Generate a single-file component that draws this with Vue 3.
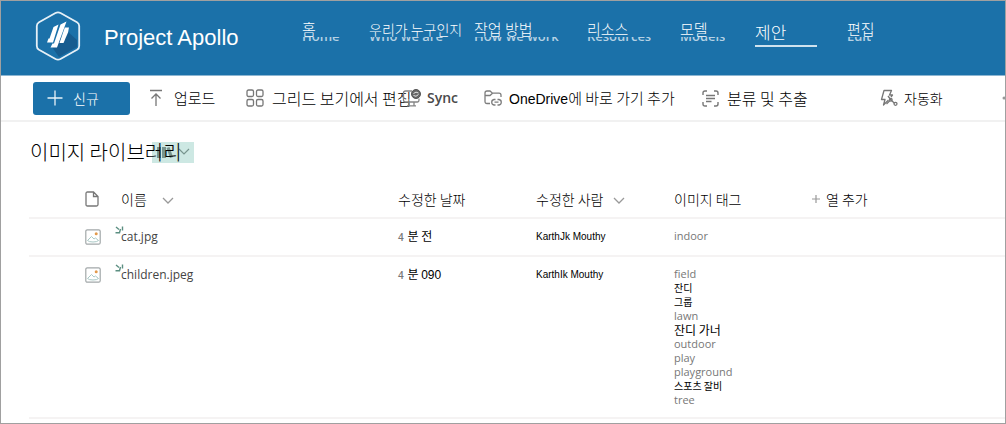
<script setup>
const nav = [
  { label: '홈', sub: 'Home' },
  { label: '우리가 누구인지', sub: 'Who we are', compact: true },
  { label: '작업 방법', sub: 'How we work' },
  { label: '리소스', sub: 'Resources' },
  { label: '모델', sub: 'Models' },
  { label: '제안', active: true },
  { label: '편집', sub: 'Edit' },
]

const files = [
  {
    name: 'cat.jpg',
    unit: '분 전',
    num: '',
    person: 'KarthJk Mouthy',
    tags: [{ t: 'indoor' }],
  },
  {
    name: 'children.jpeg',
    unit: '분',
    num: '090',
    person: 'KarthIk Mouthy',
    tags: [
      { t: 'field' },
      { t: '잔디', k: 'small' },
      { t: '그룹', k: 'small' },
      { t: 'lawn' },
      { t: '잔디 가너', k: 'large' },
      { t: 'outdoor' },
      { t: 'play' },
      { t: 'playground' },
      { t: '스포츠 잘비', k: 'small' },
      { t: 'tree' },
    ],
  },
]
</script>

<template>
  <div class="page">
    <header class="banner">
      <svg class="logo" width="46" height="50" viewBox="0 0 46 50" aria-hidden="true">
        <path d="M32 20 L42 29 V36 L24 46 L17 36 Z" fill="#175c8f" />
        <path
          d="M20.5 2 Q23 .6 25.500 2 L42 11.200 Q44.200 12.500 44.200 15 V35 Q44.200 37.500 42 38.800 L25.500 48 Q23 49.400 20.500 48 L4 38.800 Q1.800 37.500 1.800 35 V15 Q1.800 12.500 4 11.200 Z"
          fill="none" stroke="#e6f0f7" stroke-width="1.800" />
        <g fill="#fff">
          <path d="M18.500 16 L23.500 13.500 L18 31.500 H12 L13.500 27.500 H14.500 Z" />
          <path d="M25.500 13.500 L31.500 10.500 L22 36.500 H15.500 L17.500 32.500 H19 Z" />
          <path d="M29.800 16.500 H34 L33 21.500 L28.500 32 H24.500 Z" />
        </g>
      </svg>
      <h1 class="site">Project Apollo</h1>
      <nav class="nav">
        <a v-for="n in nav" :key="n.label" href="#" :class="{ compact: n.compact, active: n.active }">
          <span class="label">{{ n.label }}</span>
          <span v-if="n.sub" class="sub" aria-hidden="true"><span>{{ n.sub }}</span></span>
        </a>
      </nav>
    </header>

    <div class="toolbar">
      <button class="new">
        <svg width="16" height="16" viewBox="0 0 16 16"><path d="M8 .5V15.500M.5 8H15.500" stroke="#e8f2f8" stroke-width="1.300" /></svg>
        신규
      </button>
      <button class="upload">
        <svg width="14" height="18" viewBox="0 0 14 18" fill="none" stroke="#777" stroke-width="1.300"><path d="M1 1.500H13M7 17V5M2.500 9.500L7 5L11.500 9.500" /></svg>
        업로드
      </button>
      <button class="grid">
        <svg width="18" height="18" viewBox="0 0 18 18" fill="none" stroke="#777" stroke-width="1.300">
          <rect x="1" y="1" width="6.500" height="6.500" rx="1.500" /><rect x="10.500" y="1" width="6.500" height="6.500" rx="1.500" />
          <rect x="1" y="10.500" width="6.500" height="6.500" rx="1.500" /><rect x="10.500" y="10.500" width="6.500" height="6.500" rx="1.500" />
        </svg>
        그리드 보기에서 편집
      </button>
      <button class="sync">
        <svg width="19" height="18" viewBox="0 0 19 18" fill="none" stroke="#858585" stroke-width="1.300">
          <path d="M10 2H3.500Q1.500 2 1.500 4V11Q1.500 13 3.500 13H15.500Q17 13 17 11V9.500M7 13V16.500M12 13V16.500M5 16.800H14" />
          <circle cx="14" cy="5" r="4.500" fill="#666" stroke="#555" stroke-width="1" />
          <path d="M11.500 4.500Q14 2 16.500 4M11.500 6.500Q14 8.500 16.500 5.500" stroke="#e4e4e4" stroke-width="1" />
        </svg>
        Sync
      </button>
      <button class="onedrive">
        <svg width="19" height="18" viewBox="0 0 19 18" fill="none" stroke="#7d7d7d" stroke-width="1.300">
          <path d="M6 14.500H3Q1 14.500 1 12.500V4Q1 2 3 2H6L8.500 4.200H15Q17 4.200 17 6.200V8M1 6.500H6L8.500 4.200" />
          <path d="M11.500 10.500H10A2.800 2.800 0 0 0 10 16H11.500M13.500 10.500H15A2.800 2.800 0 0 1 15 16H13.500M10.500 13.200H14.500" />
        </svg>
        <span><span class="latin">OneDrive</span>에 바로 가기 추가</span>
      </button>
      <button class="classify">
        <svg width="17" height="17" viewBox="0 0 17 17" fill="none" stroke="#777" stroke-width="1.400">
          <path d="M1 5V3Q1 1 3 1H5M12 1H14Q16 1 16 3V5M16 12V14Q16 16 14 16H12M5 16H3Q1 16 1 14V12M4 5.500H13M4 8.500H13M4 11.500H9.500" />
        </svg>
        분류 및 추출
      </button>
      <button class="automate">
        <svg width="18" height="18" viewBox="0 0 18 18" fill="none" stroke="#777" stroke-width="1.300" stroke-linejoin="round">
          <path d="M8.500 11L3.500 16L5 10.500H1.500L4 1.500H11.500L9.500 6H12.500L11 8" />
          <path d="M8 7L11 11L14.500 14.200M9.800 11.800L6.500 15" /><circle cx="15.500" cy="14.800" r="1.500" /><circle cx="10.800" cy="10.800" r="1.300" />
        </svg>
        자동화
      </button>
      <button class="more" aria-label="더 보기"><svg width="3" height="4" viewBox="0 0 3 4"><circle cx="2" cy="2" r="1.500" fill="#999" /></svg></button>
    </div>

    <main>
      <div class="heading">
        <h2>이미지 라이브러리</h2>
        <button class="view" aria-label="보기 옵션">
          <svg width="16" height="13" viewBox="0 0 16 13" fill="#78958f"><rect x="0" y="1" width="4" height="11" /><rect x="5" y="1" width="4" height="11" /><path d="M9.500 2L12.500 1L16 11L13 12Z" /></svg>
          <svg width="12" height="8" viewBox="0 0 12 8" fill="none" stroke="#78958f" stroke-width="1.200"><path d="M1 1L6 6L11 1" /></svg>
        </button>
      </div>

      <table>
        <colgroup><col class="c-icon"><col class="c-name"><col class="c-date"><col class="c-person"><col class="c-tags"><col></colgroup>
        <thead>
          <tr>
            <th class="icon" aria-label="유형">
              <svg width="14" height="16" viewBox="0 0 14 16" fill="none" stroke="#777" stroke-width="1.300"><path d="M2.500 1H8.500L13 5.500V13.500Q13 15 11.500 15H2.500Q1 15 1 13.500V2.500Q1 1 2.500 1ZM8.500 1V5.500H13" /></svg>
            </th>
            <th>이름<svg class="chev wide" width="12" height="8" viewBox="0 0 12 8"><path d="M1 1L6 6L11 1" /></svg></th>
            <th>수정한 날짜</th>
            <th>수정한 사람<svg class="chev" width="12" height="8" viewBox="0 0 12 8"><path d="M1 1L6 6L11 1" /></svg></th>
            <th>이미지 태그</th>
            <th class="add"><button><svg width="8" height="8" viewBox="0 0 8 8"><path d="M4 0V8M0 4H8" stroke="#999" stroke-width="1.200" /></svg>열 추가</button></th>
          </tr>
        </thead>
        <tbody>
          <tr v-for="f in files" :key="f.name">
            <td class="icon">
              <svg width="16" height="16" viewBox="0 0 16 16" fill="none">
                <rect x=".8" y=".8" width="14.400" height="14.400" rx="1.500" stroke="#a2a8a9" stroke-width="1.200" />
                <path d="M2.500 11.500L6.500 7.500L9 10L10.500 9L13.500 11.500Q12 13 8 13Q4 13 2.500 11.500Z" stroke="#a9c9c6" />
                <circle cx="11.200" cy="4.800" r="1.500" fill="#e29a4c" />
              </svg>
            </td>
            <td class="name">
              <svg class="fresh" width="9" height="8" viewBox="0 0 9 8"><path d="M1 1L4 3.500M7.500 .5V4.500M.5 6.800H4.500L5.500 3" fill="none" stroke="#5c8f82" stroke-width="1.400" /></svg>
              <a href="#">{{ f.name }}</a>
            </td>
            <td class="date"><span class="four">4</span> {{ f.unit }} <span class="num">{{ f.num }}</span></td>
            <td class="person">{{ f.person }}</td>
            <td class="tags"><div v-for="g in f.tags" :key="g.t" :class="g.k">{{ g.t }}</div></td>
            <td></td>
          </tr>
        </tbody>
      </table>
    </main>
  </div>
</template>

<style>
body { margin: 0; background: #fff; }
</style>

<style scoped>
* { box-sizing: border-box; }
.page {
  min-height: 100vh;
  border: 1px solid #a0a0a0;
  overflow: hidden;
  background: #fff;
  color: #000;
  font-family: "Noto Sans CJK KR", sans-serif;
  font-weight: 300;
  font-size: 14px;
}
h1, h2 { margin: 0; font-weight: inherit; }
svg { flex: none; }
button { border: 0; padding: 0; background: none; color: inherit; font: inherit; }
a { color: inherit; text-decoration: none; }
.banner {
  display: flex;
  height: 75px;
  padding-left: 34px;
  background: #1b71a9;
  border-bottom: 1px solid #8db6d2;
  color: #fff;
}
.logo { margin-top: 10px; }
.site {
  width: 198px;
  margin: 24px 0 0 23px;
  font: 22px/25px "Liberation Sans", sans-serif;
  white-space: nowrap;
}
.nav {
  display: grid;
  grid-template-columns: 67px 105px 113px 93px 75px 92px auto;
  align-items: start;
  padding-top: 17px;
  white-space: nowrap;
}
.nav a { position: relative; justify-self: start; height: 29px; line-height: 22px; font-size: 15px; }
.nav .compact { font-size: 14px; }
.nav .active { width: 62px; font-size: 17px; line-height: 27px; border-bottom: 2px solid #cfe2ee; }
.sub {
  position: absolute;
  left: 0;
  top: 19px;
  height: 4px;
  overflow: hidden;
  display: flex;
  align-items: flex-end;
  color: #b5d1e4;
  font: 600 13px "Open Sans", sans-serif;
}
.sub span { line-height: 10px; }
.toolbar {
  display: flex;
  align-items: center;
  height: 46px;
  padding-left: 32px;
  border-bottom: 2px solid #f1f1f1;
  white-space: nowrap;
}
.toolbar button { display: flex; align-items: center; line-height: 22px; flex: none; }
.toolbar .new {
  width: 97px;
  height: 33px;
  padding-left: 14px;
  gap: 10px;
  border-radius: 3px;
  background: #1b71a9;
  color: #fff;
}
.toolbar .upload { width: 97px; margin-left: 19px; gap: 11px; font-size: 15px; }
.toolbar .grid { width: 156px; gap: 8px; font-size: 16px; }
.toolbar .sync { width: 82px; gap: 6px; color: #4a4a4a; font: 600 14px/22px "Open Sans", sans-serif; }
.toolbar .onedrive { width: 218px; gap: 6px; font-size: 15px; }
.latin { font-family: "Liberation Sans", sans-serif; font-size: 14px; font-weight: 400; }
.toolbar .classify { width: 178px; gap: 8px; font-size: 16px; }
.toolbar .automate { gap: 6px; }
.toolbar .more { margin-left: auto; }
.heading { display: flex; align-items: center; height: 60px; padding-left: 29px; }
.heading h2 { position: relative; z-index: 1; font-size: 20px; line-height: 30px; }
.view {
  display: flex;
  align-items: center;
  gap: 5px;
  width: 42px;
  height: 21px;
  margin-left: -30px;
  padding-left: 5px !important;
  background: #cde8e3;
}
table {
  width: calc(100% - 28px);
  margin-left: 28px;
  table-layout: fixed;
  border-collapse: collapse;
}
.c-icon { width: 92px; }
.c-name { width: 277px; }
.c-date { width: 138px; }
.c-person { width: 138px; }
.c-tags { width: 138px; }
tr { border-bottom: 2px solid #f5f3f3; }
th { height: 36px; padding: 0 0 2px; text-align: left; font-weight: 300; line-height: 22px; white-space: nowrap; }
th.icon, td.icon { padding-left: 56px; }
.icon svg { display: block; }
.chev { margin-left: 9px; fill: none; stroke: #999; stroke-width: 1.3; }
.wide { margin-left: 15px; }
.add button { display: flex; align-items: center; gap: 6px; }
td { padding: 10px 0; vertical-align: top; line-height: 16px; }
.name { position: relative; color: #444; font: 12px/16px "Open Sans", sans-serif; }
.fresh { position: absolute; left: -6px; top: 7px; }
.date { font-size: 12px; font-weight: 400; line-height: 14px; }
.four { margin-right: 1px; color: #777; font: 600 10px "Open Sans", sans-serif; }
.num, .person { font-family: "Liberation Sans", sans-serif; font-weight: 400; }
.person { font-size: 10px; }
.tags { color: #777; font: 11px/14px "Open Sans", sans-serif; }
.tags div { height: 14px; }
.small, .large { color: #000; font: 12px/14px "Noto Sans CJK KR", sans-serif; }
.small { font-size: 10px; }
</style>
